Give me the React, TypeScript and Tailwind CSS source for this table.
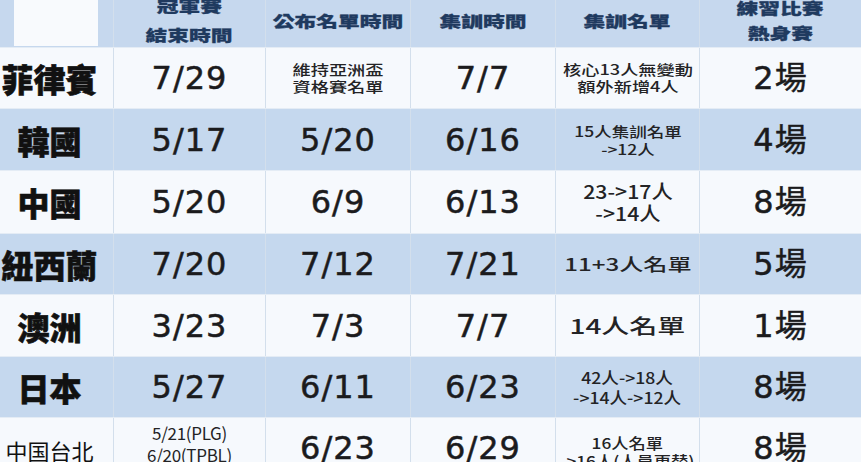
import React from "react";

type CellT =
  | { kind: "num"; v: string }
  | { kind: "lines"; lines: string[]; cls: string; wrap?: string };

type Row = { name: string; nameCls: string; cells: CellT[]; bg: string; h: string };

const NUM =
  "font-['DejaVu_Sans','Noto_Sans_CJK_TC',sans-serif] text-[32px] leading-none tracking-[1px] text-[#1b1b1d] [-webkit-text-stroke:0.5px_#1b1b1d]";
const SMALL = "font-['Noto_Sans_CJK_TC',sans-serif] font-medium text-[#232325]";
const BOLDNAME =
  "font-['Noto_Sans_CJK_TC',sans-serif] font-black text-[32px] text-[#111] [-webkit-text-stroke:0.6px_#111]";

const WHITE = "bg-[#f6f9fd]";
const BLUE = "bg-[#c5d8ee]";

const rows: Row[] = [
  {
    name: "菲律賓",
    nameCls: BOLDNAME,
    bg: WHITE,
    h: "h-[61px]",
    cells: [
      { kind: "num", v: "7/29" },
      { kind: "lines", lines: ["維持亞洲盃", "資格賽名單"], cls: "text-[14px] leading-[17px] scale-x-[1.3]" },
      { kind: "num", v: "7/7" },
      { kind: "lines", lines: ["核心13人無變動", "額外新增4人"], cls: "text-[14px] leading-[17px] scale-x-[1.3]" },
      { kind: "num", v: "2場" },
    ],
  },
  {
    name: "韓國",
    nameCls: BOLDNAME,
    bg: BLUE,
    h: "h-[62px]",
    cells: [
      { kind: "num", v: "5/17" },
      { kind: "num", v: "5/20" },
      { kind: "num", v: "6/16" },
      { kind: "lines", lines: ["15人集訓名單", "->12人"], cls: "text-[14px] leading-[18px] scale-x-[1.25]" },
      { kind: "num", v: "4場" },
    ],
  },
  {
    name: "中國",
    nameCls: BOLDNAME,
    bg: WHITE,
    h: "h-[63px]",
    cells: [
      { kind: "num", v: "5/20" },
      { kind: "num", v: "6/9" },
      { kind: "num", v: "6/13" },
      { kind: "lines", lines: ["23->17人", "->14人"], cls: "text-[19px] leading-[22px] scale-x-[1.12]" },
      { kind: "num", v: "8場" },
    ],
  },
  {
    name: "紐西蘭",
    nameCls: BOLDNAME,
    bg: BLUE,
    h: "h-[61px]",
    cells: [
      { kind: "num", v: "7/20" },
      { kind: "num", v: "7/12" },
      { kind: "num", v: "7/21" },
      { kind: "lines", lines: ["11+3人名單"], cls: "text-[17px] leading-[20px] scale-x-[1.42]" },
      { kind: "num", v: "5場" },
    ],
  },
  {
    name: "澳洲",
    nameCls: BOLDNAME,
    bg: WHITE,
    h: "h-[62px]",
    cells: [
      { kind: "num", v: "3/23" },
      { kind: "num", v: "7/3" },
      { kind: "num", v: "7/7" },
      { kind: "lines", lines: ["14人名單"], cls: "text-[20px] leading-[22px] scale-x-[1.4]" },
      { kind: "num", v: "1場" },
    ],
  },
  {
    name: "日本",
    nameCls: BOLDNAME,
    bg: BLUE,
    h: "h-[61px]",
    cells: [
      { kind: "num", v: "5/27" },
      { kind: "num", v: "6/11" },
      { kind: "num", v: "6/23" },
      { kind: "lines", lines: ["42人->18人", "->14人->12人"], cls: "text-[16px] leading-[20px] scale-x-[1.1]" },
      { kind: "num", v: "8場" },
    ],
  },
  {
    name: "中国台北",
    nameCls: "font-['Noto_Sans_CJK_SC',sans-serif] font-normal text-[22px] text-[#111] pt-[4px]",
    bg: WHITE,
    h: "h-[60px]",
    cells: [
      {
        kind: "lines",
        lines: ["5/21(PLG)", "6/20(TPBL)"],
        cls: "font-['DejaVu_Sans',sans-serif] font-normal text-[17px] leading-[22px] tracking-[-0.3px]",
        wrap: "pb-[8px]",
      },
      { kind: "num", v: "6/23" },
      { kind: "num", v: "6/29" },
      { kind: "lines", lines: ["16人名單", "->16人(人員更替)"], cls: "text-[15px] leading-[18px] scale-x-[1.15]", wrap: "pt-[8px]" },
      { kind: "num", v: "8場" },
    ],
  },
];

const GRID = "grid grid-cols-[113px_152px_145px_145px_144px_162px]";
const HEAD =
  "font-['Noto_Sans_CJK_TC',sans-serif] font-black text-[15px] text-[#1f3a5f] inline-block scale-x-[1.45] [-webkit-text-stroke:0.3px_#1f3a5f]";

function Cell({ c }: { c: CellT }) {
  if (c.kind === "num") {
    return (
      <div className="flex items-center justify-center border-l border-[#d3dfec]">
        <span className={NUM}>{c.v}</span>
      </div>
    );
  }
  return (
    <div className={`flex items-center justify-center border-l border-[#d3dfec] ${c.wrap ?? ""}`}>
      <div className={`flex flex-col items-center whitespace-nowrap ${SMALL} ${c.cls}`}>
        {c.lines.map((l) => (
          <span key={l}>{l}</span>
        ))}
      </div>
    </div>
  );
}

export default function App() {
  return (
    <div className="w-[861px] h-[462px] overflow-hidden bg-[#f6f9fd] flex flex-col">
      {/* header */}
      <div className={`${GRID} grid-rows-[47px] h-[47px] shrink-0 overflow-hidden bg-[#c6d8ee]`}>
        <div className="pl-[14px] pr-[15px] flex">
          <div className="w-full h-[46px] bg-[#f8fafd]" />
        </div>
        <div className="flex items-center justify-center border-l border-[#d3dfec] pb-[7px]">
          <div className="flex flex-col items-center leading-[29px]">
            <span className={HEAD}>冠軍賽</span>
            <span className={HEAD}>結束時間</span>
          </div>
        </div>
        <div className="flex items-center justify-center border-l border-[#d3dfec] pb-[5px]">
          <span className={HEAD}>公布名單時間</span>
        </div>
        <div className="flex items-center justify-center border-l border-[#d3dfec] pb-[5px]">
          <span className={HEAD}>集訓時間</span>
        </div>
        <div className="flex items-center justify-center border-l border-[#d3dfec] pb-[5px]">
          <span className={HEAD}>集訓名單</span>
        </div>
        <div className="flex items-center justify-center border-l border-[#d3dfec] pb-[7px]">
          <div className="flex flex-col items-center leading-[25px]">
            <span className={HEAD}>練習比賽</span>
            <span className={HEAD}>熱身賽</span>
          </div>
        </div>
      </div>
      {rows.map((r) => (
        <div key={r.name} className={`${GRID} ${r.h} shrink-0 ${r.bg} border-t border-[#e4ecf5]`}>
          <div className="flex items-center justify-center pr-[14px]">
            <span className={`${r.nameCls} leading-none whitespace-nowrap`}>{r.name}</span>
          </div>
          {r.cells.map((c, i) => (
            <Cell key={i} c={c} />
          ))}
        </div>
      ))}
    </div>
  );
}
